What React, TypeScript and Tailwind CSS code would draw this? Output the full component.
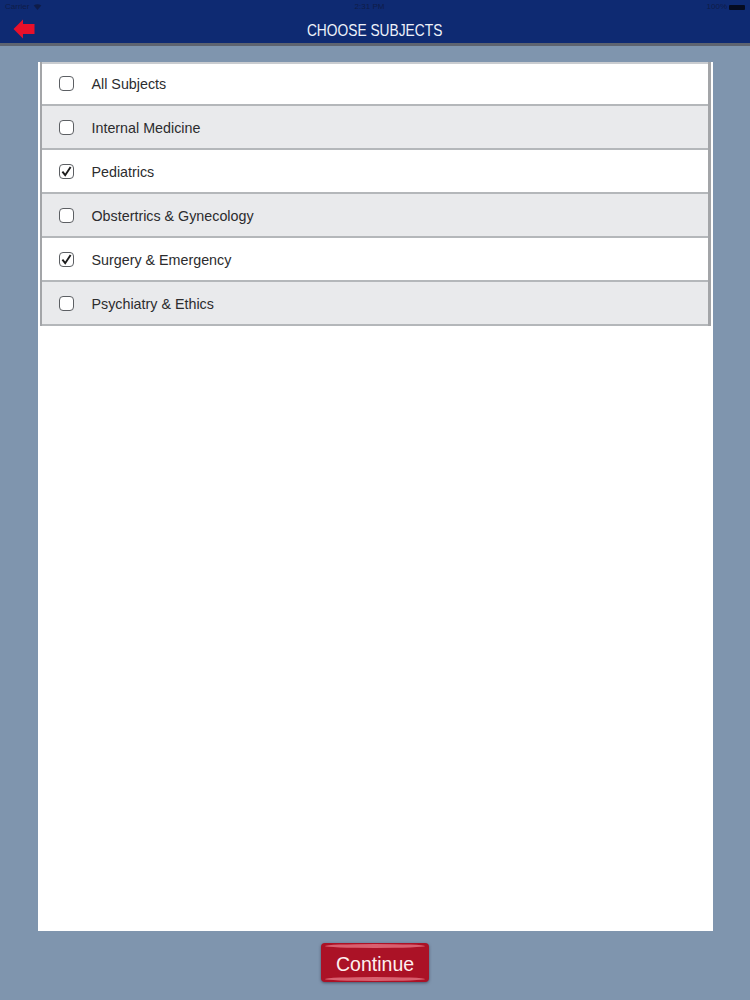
const subjects = [
  { name: "All Subjects", checked: false },
  { name: "Internal Medicine", checked: false },
  { name: "Pediatrics", checked: true },
  { name: "Obstertrics & Gynecology", checked: false },
  { name: "Surgery & Emergency", checked: true },
  { name: "Psychiatry & Ethics", checked: false },
];

function Checkbox({ checked }: { checked: boolean }) {
  return (
    <span className="flex h-[15px] w-[15px] shrink-0 items-center justify-center rounded-[4px] border-[1.5px] border-[#5c5f63] bg-white">
      {checked && (
        <svg viewBox="0 0 13 13" className="h-[13px] w-[13px]">
          <path d="M2.4 6.6 L5.2 10.2 L10.6 2" fill="none" stroke="#1c1c1c" strokeWidth="1.9" />
        </svg>
      )}
    </span>
  );
}

export default function App() {
  return (
    <div className="flex h-[1000px] w-[750px] flex-col bg-[#7f95ae] font-['Liberation_Sans',sans-serif]">
      {/* status bar + nav */}
      <header className="h-[46px] shrink-0 border-b-[3px] border-[#5e6470] bg-[#0e2a72]">
        <div className="flex h-[14px] items-center justify-between px-[5px] text-[8px] text-[#0f1c48]">
          <span className="flex items-center gap-1">
            Carrier
            <svg viewBox="0 0 10 8" className="h-[6px] w-[9px]">
              <path d="M0 2 Q5 -1.5 10 2 L5 8 Z" fill="#0f1c48" />
            </svg>
          </span>
          <span className="-ml-[10px]">2:31 PM</span>
          <span className="flex items-center gap-[2px]">
            100%
            <span className="h-[5px] w-[16px] rounded-[1px] bg-[#050b20]" />
          </span>
        </div>
        <div className="relative flex h-[29px] items-center justify-center">
          <svg viewBox="0 0 22 20" className="absolute left-[13px] top-[5px] h-[20px] w-[22px]">
            <path d="M0.5 10 L10 0.5 L10 5 L21.5 5 L21.5 15 L10 15 L10 19.5 Z" fill="#e8102a" />
          </svg>
          <h1 className="scale-x-[0.81] pt-[5px] text-[17px] font-normal whitespace-nowrap text-[#eef2fa]">
            CHOOSE SUBJECTS
          </h1>
        </div>
      </header>

      <main className="mx-auto mt-4 h-[869px] w-[675px] shrink-0 bg-white">
        <ul className="ml-[2px] w-[671px] border-x-[3px] border-x-[#a3a5a8] [border-left-width:2px]">
          {subjects.map((s, i) => (
            <li
              key={s.name}
              className={`flex h-[44px] items-center gap-[18px] border-b-2 border-[#b4b7ba] pl-[17px] first:shadow-[inset_0_2px_0_#c9ccd0] ${
                i % 2 === 1 ? "bg-[#e9eaec]" : "bg-white"
              }`}
            >
              <Checkbox checked={s.checked} />
              <span className="pt-[4px] text-[14.3px] text-[#2c2c2e]">{s.name}</span>
            </li>
          ))}
        </ul>
      </main>

      <div className="flex flex-1 items-start justify-center pt-[12px]">
        <button className="relative h-[39px] w-[108px] overflow-hidden rounded-[4px] bg-[#ab1226] pt-[2px] text-[21px] text-[#fdf0f0] shadow-[0_1px_3px_rgba(40,40,60,0.6)]">
          <span className="absolute inset-x-[4px] top-[1px] h-[4px] rounded-[50%] bg-[#d9606f]" />
          <span className="absolute inset-x-[4px] bottom-[1px] h-[4px] rounded-[50%] bg-[#d9606f]" />
          <span className="inline-block scale-x-[0.93]">Continue</span>
        </button>
      </div>
    </div>
  );
}
